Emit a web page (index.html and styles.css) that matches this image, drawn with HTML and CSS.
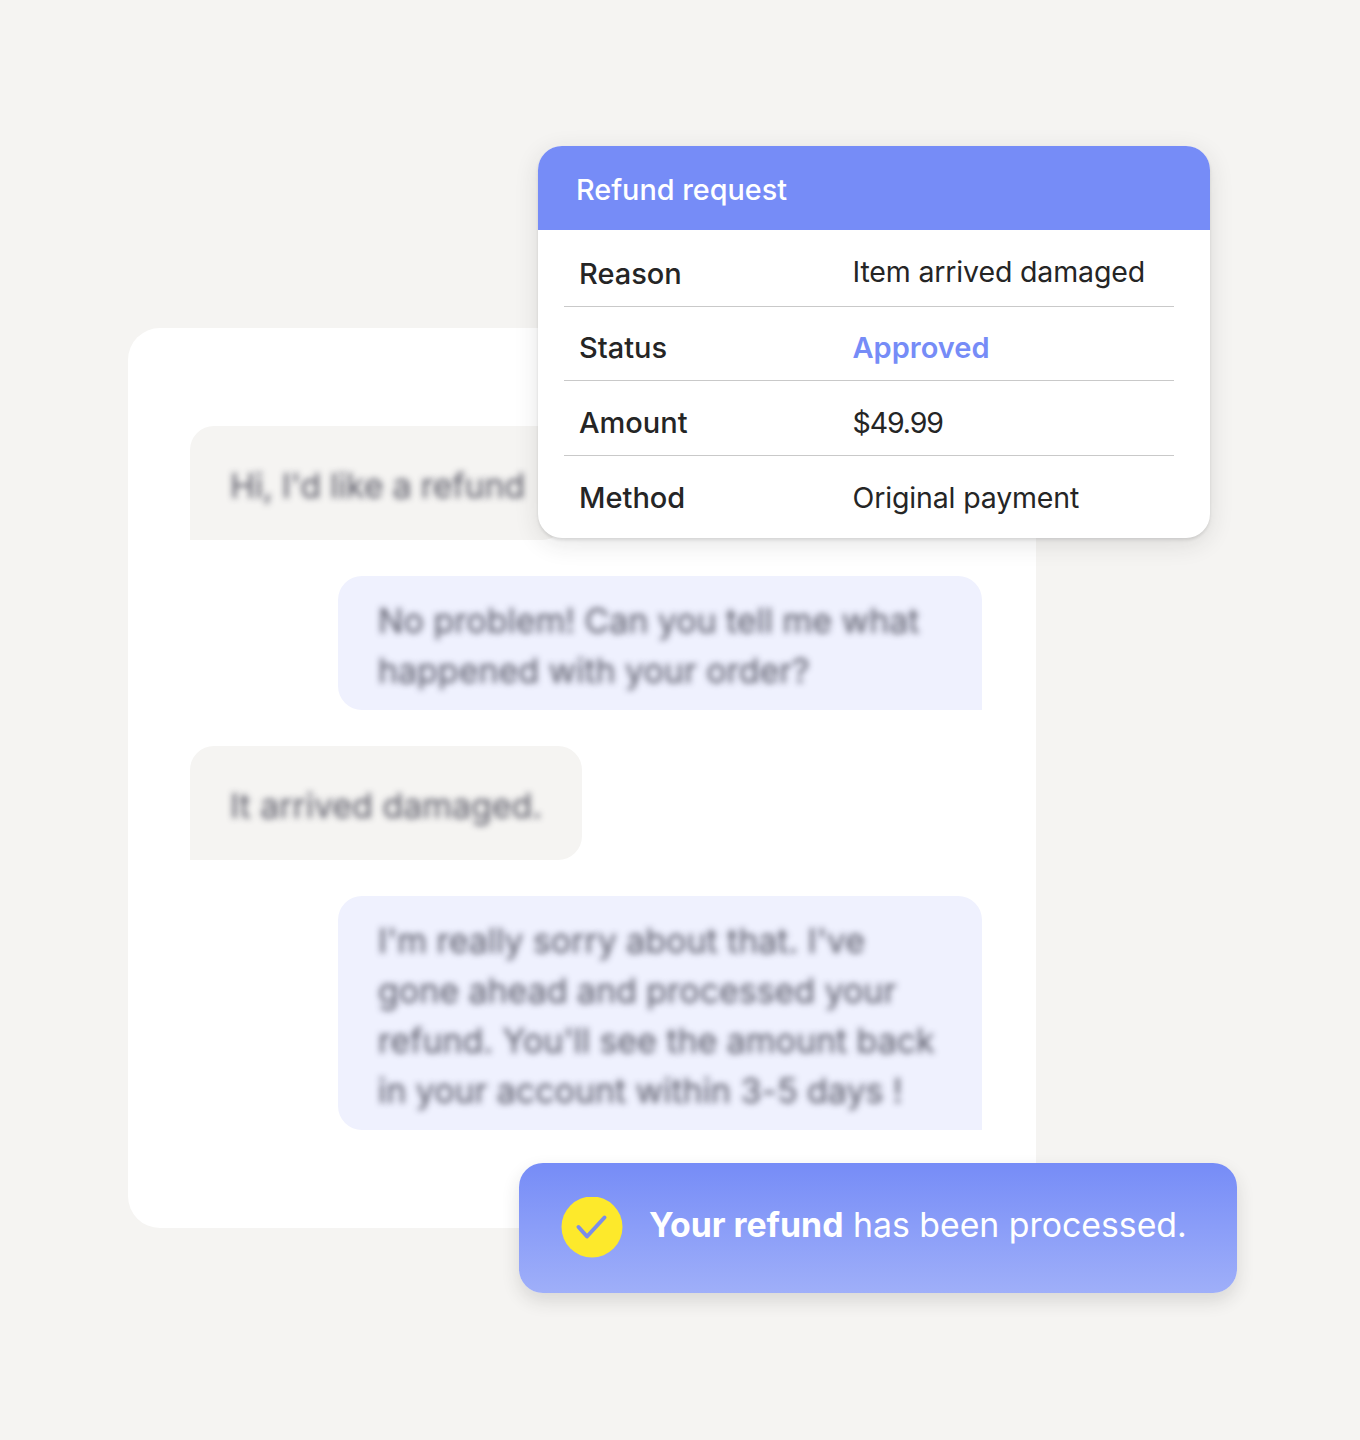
FILE: index.html
```html
<!DOCTYPE html>
<html lang="en">
	<head>
		<title>Refund request</title>
		<meta charset="UTF-8" />
		<link rel="stylesheet" href="styles.css">
	</head>
	<body>
		<div class="stage">
			<div class="chat">
				<div class="bubble customer first">Hi, I'd like a refund</div>
				<div class="bubble agent">No problem! Can you tell me what happened with your order?</div>
				<div class="bubble customer second">It arrived damaged.</div>
				<div class="bubble agent">I'm really sorry about that. I've gone ahead and processed your refund. You'll see the amount back in your account within 3-5 days !</div>
			</div>

			<div class="request">
				<div class="requestTitle">Refund request</div>
				<div class="requestRows">
					<div class="row"><span class="rowLabel">Reason</span><span class="rowValue raised">Item arrived damaged</span></div>
					<div class="row"><span class="rowLabel">Status</span><span class="rowValue approved">Approved</span></div>
					<div class="row"><span class="rowLabel">Amount</span><span class="rowValue price">$49.99</span></div>
					<div class="row"><span class="rowLabel">Method</span><span class="rowValue">Original payment</span></div>
				</div>
			</div>

			<div class="toast">
				<svg class="toastIcon" width="62" height="62" viewBox="0 0 62 62">
					<circle cx="31" cy="30" r="30.5" fill="#FDE92B" />
					<path d="M17.5 30 L26 39.5 L43.5 20.5" fill="none" stroke="#7B8DE8" stroke-width="4" stroke-linecap="round" stroke-linejoin="round" />
				</svg>
				<div class="toastText"><strong>Your refund</strong> has been processed.</div>
			</div>
		</div>
	</body>
</html>
```

FILE: styles.css
```css
html, body {
	margin: 0px;
	padding: 0px;
	background: #F5F4F2;
	font-family: Inter, "Liberation Sans", sans-serif;
}
.stage {
	position: relative;
	width: 1360px;
	height: 1440px;
	padding: 328px 0px 0px 128px;
	box-sizing: border-box;
	overflow: hidden;
}

/* Chat behind the two cards */
.chat {
	display: flex;
	flex-direction: column;
	align-items: flex-start;
	gap: 36px;
	width: 908px;
	height: 900px;
	padding: 98px 54px 0px 62px;
	box-sizing: border-box;
	background: #FFFFFF;
	border-radius: 32px;
}
/* Blurred text only, the bubble itself stays sharp */
.bubble {
	box-sizing: border-box;
	font-size: 34px;
	line-height: 50px;
	letter-spacing: -0.05px;
	color: transparent;
	text-shadow: 0px 0px 6px rgba(60, 60, 75, 0.85);
}
.customer {
	padding: 35px 40px 29px 40px;
	background: #F5F4F2;
	border-radius: 24px 24px 24px 0px;
	white-space: nowrap;
}
.customer.first {
	width: 376px;
	letter-spacing: -0.25px;
}
.customer.second {
	width: 392px;
}
.agent {
	align-self: flex-end;
	width: 644px;
	padding: 20px 40px 14px 40px;
	background: #EFF1FE;
	border-radius: 24px 24px 0px 24px;
}

.request {
	position: absolute;
	left: 538px;
	top: 146px;
	width: 672px;
	height: 392px;
	background: #FFFFFF;
	border-radius: 24px;
	overflow: hidden;
	box-shadow: 0px 2px 3px rgba(40, 40, 40, 0.12), 0px 6px 24px rgba(40, 40, 40, 0.12);
}
.requestTitle {
	height: 84px;
	padding-left: 38px;
	box-sizing: border-box;
	background: #768CF7;
	color: #FFFFFF;
	font-size: 28.8px;
	font-weight: 500;
	line-height: 88px;
}
.requestRows {
	margin: 2px 36px 0px 26px;
}
.row {
	display: flex;
	align-items: center;
	height: 74.5px;
	box-sizing: border-box;
	padding: 9px 0px 0px 15px;
	border-bottom: 1px solid #C9C9C9;
	font-size: 29px;
	color: #252525;
}
.row:last-child {
	border-bottom: 0px;
}
.rowLabel {
	width: 273.5px;
	font-weight: 500;
}
.rowValue {
	font-size: 28.5px;
	letter-spacing: -0.15px;
}
.raised {
	margin-top: -4px;
}
.approved {
	font-size: 29px;
	letter-spacing: 0px;
	color: #768CF7;
	font-weight: 600;
}
.price {
	letter-spacing: -1.1px;
}

.toast {
	position: absolute;
	left: 519px;
	top: 1163px;
	display: flex;
	align-items: center;
	gap: 26px;
	width: 718px;
	height: 130px;
	padding: 0px 0px 0px 42px;
	box-sizing: border-box;
	background: linear-gradient(180deg, #768CF7 0%, #9FAFF9 100%);
	border-radius: 24px;
	box-shadow: 0px 8px 18px rgba(40, 40, 40, 0.14);
	color: #FFFFFF;
	font-size: 33.8px;
}
.toastIcon {
	flex: none;
}
.toastText {
	margin-bottom: 8px;
}
.toastText strong {
	font-weight: 700;
}
```
